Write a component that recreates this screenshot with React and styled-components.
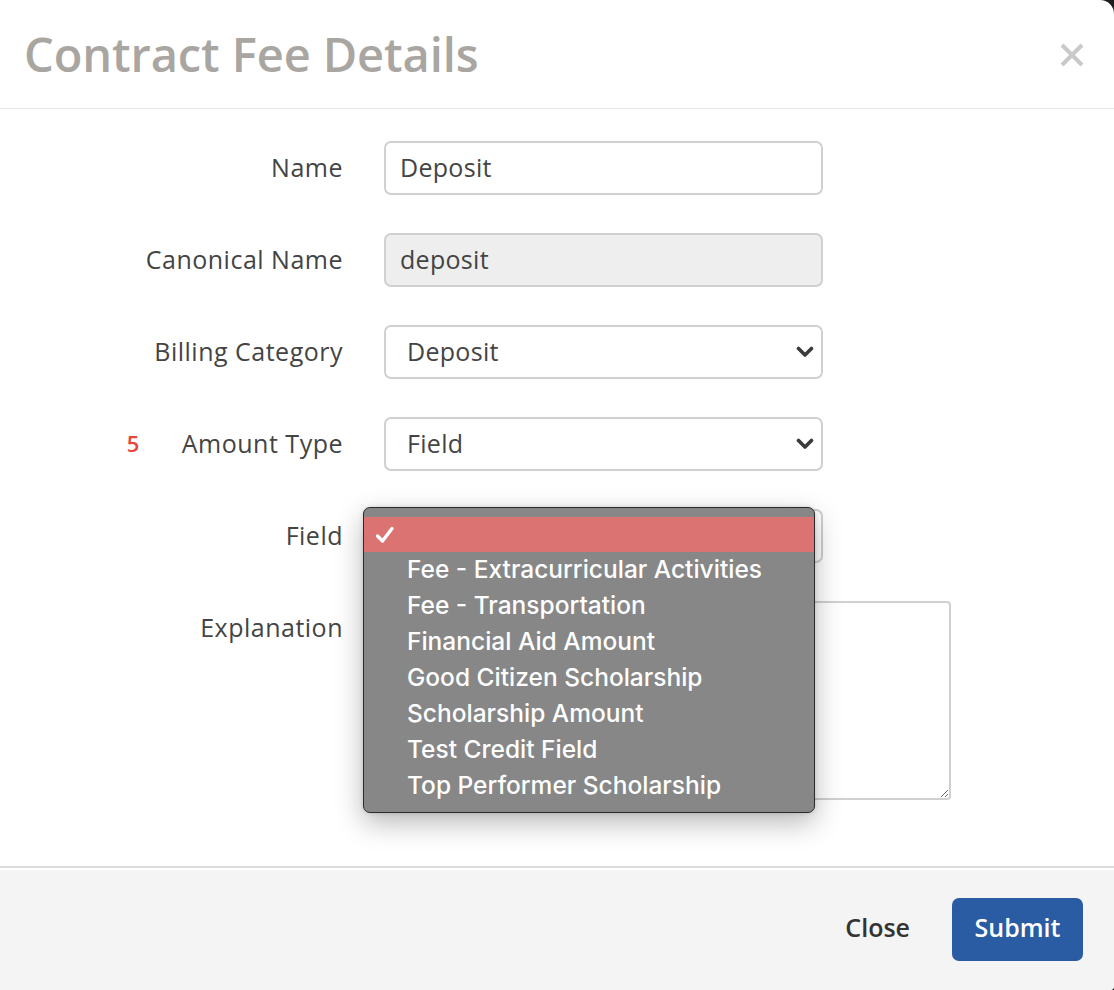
import React from 'react';
import styled, { createGlobalStyle } from 'styled-components';

const GlobalStyle = createGlobalStyle`
  html, body {
    margin: 0;
    padding: 0;
    background: #1c1c1c;
  }
  * { box-sizing: border-box; }
`;

const fieldOptions = [
  "Fee - Extracurricular Activities",
  "Fee - Transportation",
  "Financial Aid Amount",
  "Good Citizen Scholarship",
  "Scholarship Amount",
  "Test Credit Field",
  "Top Performer Scholarship",
];

const Chevron = () => (
  <svg width="18" height="12" viewBox="0 0 18 12">
    <polyline points="2.5,2.5 9,9 15.5,2.5" fill="none" stroke="#3a3a3a" strokeWidth="3.6" strokeLinecap="round" strokeLinejoin="round" />
  </svg>
);

const Check = () => (
  <svg width="20" height="18" viewBox="0 0 20 18">
    <polyline points="2.5,10 7.5,15 17,2.5" fill="none" stroke="#fff" strokeWidth="3.4" strokeLinecap="round" strokeLinejoin="round" />
  </svg>
);

export default function App() {
  return (
    <>
      <GlobalStyle />
      <Dialog>
        <Header>
          <Title>Contract Fee Details</Title>
          <CloseX aria-label="close">
            <svg width="24" height="24" viewBox="0 0 24 24">
              <line x1="2" y1="2" x2="22" y2="22" stroke="#c9c9c9" strokeWidth="4" />
              <line x1="22" y1="2" x2="2" y2="22" stroke="#c9c9c9" strokeWidth="4" />
            </svg>
          </CloseX>
        </Header>

        <Body>
          <Label>Name</Label>
          <Input defaultValue="Deposit" />

          <Label>Canonical Name</Label>
          <Input defaultValue="deposit" readOnly $disabled />

          <Label>Billing Category</Label>
          <Select>
            <span>Deposit</span>
            <Chevron />
          </Select>

          <Label>
            <Marker>5</Marker>
            Amount Type
          </Label>
          <Select>
            <span>Field</span>
            <Chevron />
          </Select>

          <Label>Field</Label>
          <Select>
            <span></span>
            <Chevron />
          </Select>

          <Label>Explanation</Label>
          <TextArea />
        </Body>

        <Footer>
          <LinkButton>Close</LinkButton>
          <PrimaryButton>Submit</PrimaryButton>
        </Footer>

        <Menu>
          <MenuItem $selected>
            <CheckSlot><Check /></CheckSlot>
          </MenuItem>
          {fieldOptions.map(o => (
            <MenuItem key={o}>
              <CheckSlot />
              {o}
            </MenuItem>
          ))}
        </Menu>
      </Dialog>
    </>
  );
}

const Dialog = styled.div`
  position: relative;
  width: 1114px;
  height: 990px;
  background: #fff;
  border-top-right-radius: 14px;
  border-bottom-right-radius: 4px;
  overflow: hidden;
  display: flex;
  flex-direction: column;
  font-family: "Open Sans", "Liberation Sans", sans-serif;
  color: #444;
`;

const Header = styled.div`
  height: 109px;
  flex-shrink: 0;
  display: flex;
  align-items: center;
  justify-content: space-between;
  padding: 0 30px 0 24px;
  border-bottom: 1px solid #e8e8e8;
`;

const Title = styled.h1`
  margin: 0;
  font-size: 47px;
  font-weight: 600;
  color: #a9a6a2;
  letter-spacing: -0.1px;
  line-height: 1;
`;

const CloseX = styled.button`
  border: none;
  background: none;
  padding: 0;
  display: flex;
  margin-top: 2px;
  cursor: pointer;
`;

const Body = styled.div`
  flex: 1;
  display: grid;
  grid-template-columns: 343px auto;
  grid-auto-rows: min-content;
  column-gap: 41px;
  row-gap: 38px;
  padding-top: 32px;
  justify-content: start;
  align-content: start;
`;

const Label = styled.div`
  height: 54px;
  padding-bottom: 3px;
  display: flex;
  align-items: center;
  justify-content: flex-end;
  font-size: 25px;
  letter-spacing: 0.5px;
  color: #444;
  white-space: nowrap;
`;

const Marker = styled.span`
  color: #e8463c;
  font-weight: 600;
  font-size: 22px;
  margin-right: 42px;
`;

const Input = styled.input`
  width: 439px;
  height: 54px;
  border: 2px solid #d0d0d0;
  border-radius: 7px;
  padding: 0 14px 3px;
  font-family: inherit;
  font-size: 25px;
  letter-spacing: 0.3px;
  color: #444;
  background: ${p => (p.$disabled ? '#eeeeee' : '#fff')};
  outline: none;
`;

const Select = styled.div`
  width: 439px;
  height: 54px;
  border: 2px solid #d0d0d0;
  border-radius: 7px;
  padding: 0 7px 3px 21px;
  display: flex;
  align-items: center;
  justify-content: space-between;
  font-size: 25px;
  letter-spacing: 0.3px;
  color: #444;
  background: #fff;

  svg { margin-top: 3px; }
`;

const TextArea = styled.textarea`
  width: 567px;
  height: 199px;
  border: 2px solid #d0d0d0;
  border-radius: 4px;
  font-family: inherit;
  font-size: 24px;
  resize: both;
  outline: none;
`;

const Footer = styled.div`
  height: 124px;
  flex-shrink: 0;
  display: flex;
  align-items: center;
  justify-content: flex-end;
  gap: 42px;
  padding: 0 31px 0 0;
  background: #f4f4f4;
  border-top: 2px solid #dcdcdc;
  box-shadow: inset 0 2px 0 #fff;
`;

const LinkButton = styled.button`
  border: none;
  background: none;
  font-family: inherit;
  font-size: 25px;
  font-weight: 600;
  color: #333;
  padding: 0 0 4px;
  cursor: pointer;
`;

const PrimaryButton = styled.button`
  width: 131px;
  height: 63px;
  border: none;
  border-radius: 7px;
  background: #2a5ca4;
  color: #fff;
  font-family: inherit;
  font-size: 25px;
  font-weight: 600;
  padding: 0 0 4px;
  cursor: pointer;
`;

const Menu = styled.div`
  position: absolute;
  left: 363px;
  top: 507px;
  width: 452px;
  height: 306px;
  padding: 9px 0 8px;
  background: #878787;
  border: 1px solid #2b2b2b;
  border-radius: 7px;
  box-shadow: 0 10px 28px rgba(0, 0, 0, 0.28), 0 0 4px rgba(0, 0, 0, 0.15);
  font-family: Inter, "Open Sans", sans-serif;
  overflow: hidden;
`;

const MenuItem = styled.div`
  height: 36px;
  padding-bottom: 4px;
  display: flex;
  align-items: center;
  font-size: 24.5px;
  font-weight: 500;
  color: #fff;
  background: ${p => (p.$selected ? '#dc7373' : 'transparent')};
  ${p => p.$selected && 'height: 35px; margin-bottom: 1px; padding-bottom: 0;'}
`;

const CheckSlot = styled.span`
  width: 43px;
  padding-left: 11px;
  display: flex;
  align-items: center;
`;
